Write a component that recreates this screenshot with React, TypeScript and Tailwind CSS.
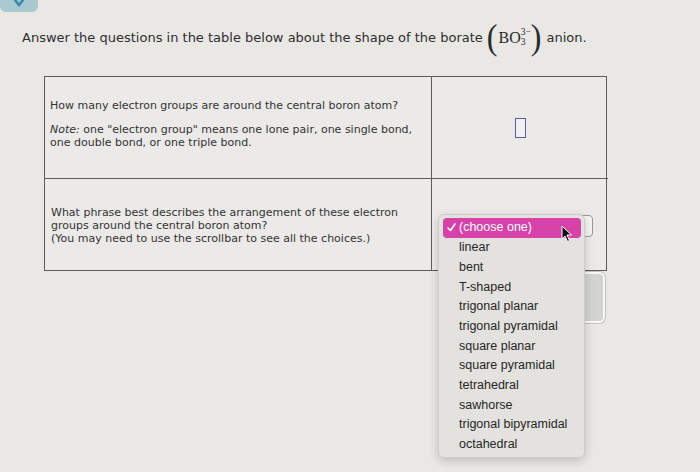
import React from "react";

const choices = [
    "linear",
    "bent",
    "T-shaped",
    "trigonal planar",
    "trigonal pyramidal",
    "square planar",
    "square pyramidal",
    "tetrahedral",
    "sawhorse",
    "trigonal bipyramidal",
    "octahedral",
];

function Cursor() {
    return (
        <svg width="12" height="18" viewBox="0 0 12 18" className="absolute left-[561px] top-[225px]">
            <path d="M1 1 L1 14 L4 11 L6.5 16.5 L8.5 15.5 L6 10 L10.5 10 Z" fill="#111" stroke="#fff" strokeWidth="1" strokeLinejoin="round" />
        </svg>
    );
}

export default function App() {
    return (
        <div className="relative w-[700px] h-[472px] overflow-hidden bg-[#e9e8e5] text-[#2e2e2e] font-['DejaVu_Sans',Verdana,sans-serif]">
            {/* top-left tab */}
            <div className="w-[38px] h-[12px] rounded-b-[6px] bg-[#a9c9d1] flex justify-center">
                <svg width="12" height="8" viewBox="0 0 12 8">
                    <path d="M2 0 L6 5 L10 0" fill="none" stroke="#2f89ab" strokeWidth="2.5" strokeLinecap="round" />
                </svg>
            </div>

            {/* question heading */}
            <div className="mt-[9px] ml-[22px] h-[34px] flex items-center text-[13px]">
                <span>Answer the questions in the table below about the shape of the borate</span>
                <span className="ml-[4px] inline-flex items-center font-['Liberation_Serif',serif] text-[#2b2b2b]">
                    <span className="text-[32px] leading-none font-light scale-y-110 -mt-[3px]">(</span>
                    <span className="text-[16px] ml-[1px]">BO</span>
                    <span className="inline-flex flex-col text-[9.5px] leading-[10px] -mt-[2px]">
                        <span>3−</span>
                        <span>3</span>
                    </span>
                    <span className="text-[32px] leading-none font-light scale-y-110 -mt-[3px]">)</span>
                </span>
                <span className="ml-[5px]">anion.</span>
            </div>

            {/* table */}
            <div className="ml-[44px] mt-[21px] w-[563px] grid grid-cols-[387px_176px] border border-[#5c5c5c] bg-[#ebeae8] text-[11px] leading-[13px] text-[#333]">
                <div className="h-[102px] border-r border-b border-[#5c5c5c] pl-[5px] pt-[22px]">
                    <p>How many electron groups are around the central boron atom?</p>
                    <p className="mt-[11px]">
                        <i>Note:</i> one "electron group" means one lone pair, one single bond,
                        <br />
                        one double bond, or one triple bond.
                    </p>
                </div>
                <div className="h-[102px] border-b border-[#5c5c5c] flex items-center justify-center">
                    <div className="w-[11px] h-[20px] border-[1.5px] border-[#5b5ba6] bg-[#f1f1f1]" />
                </div>
                <div className="h-[91px] border-r border-[#5c5c5c] pl-[6px] pt-[28px] leading-[12.8px]">
                    <p>What phrase best describes the arrangement of these electron</p>
                    <p>groups around the central boron atom?</p>
                    <p>(You may need to use the scrollbar to see all the choices.)</p>
                </div>
                <div className="h-[91px] pl-[14px] pt-[36px]">
                    <div className="w-[147px] h-[22px] rounded-[4px] border border-[#9a9a9a] bg-[#f4f4f4]" />
                </div>
            </div>

            {/* buttons panel partly behind the menu */}
            <div className="ml-[470px] mt-[1px] w-[135px] h-[51px] rounded-[6px] border-2 border-[#f7f7f7] bg-[#d3d3d2] shadow-[0_0_0_1px_#c4c4c4]" />

            {/* open select menu */}
            <div className="absolute left-[438px] top-[214px] w-[147px] rounded-[6px] border border-[#cfcdca] bg-[#e4e2df] shadow-[0_3px_10px_rgba(0,0,0,0.18)] pt-[3px] pb-[3px] pl-[4px] pr-[3px] font-['Liberation_Sans',Arial,sans-serif] text-[12.5px] text-[#262626]">
                <div className="h-[19.7px] rounded-[4px] bg-[#d742a8] text-white flex items-center">
                    <span className="w-[16px] pl-[4px] flex items-center">
                        <svg width="9" height="9" viewBox="0 0 9 9">
                            <path d="M1 5 L3.5 7.5 L8 1" fill="none" stroke="#fff" strokeWidth="1.6" strokeLinecap="round" strokeLinejoin="round" />
                        </svg>
                    </span>
                    <span>(choose one)</span>
                </div>
                {choices.map((c) => (
                    <div key={c} className="h-[19.7px] pl-[16px] flex items-center">
                        {c}
                    </div>
                ))}
            </div>

            <Cursor />
        </div>
    );
}
